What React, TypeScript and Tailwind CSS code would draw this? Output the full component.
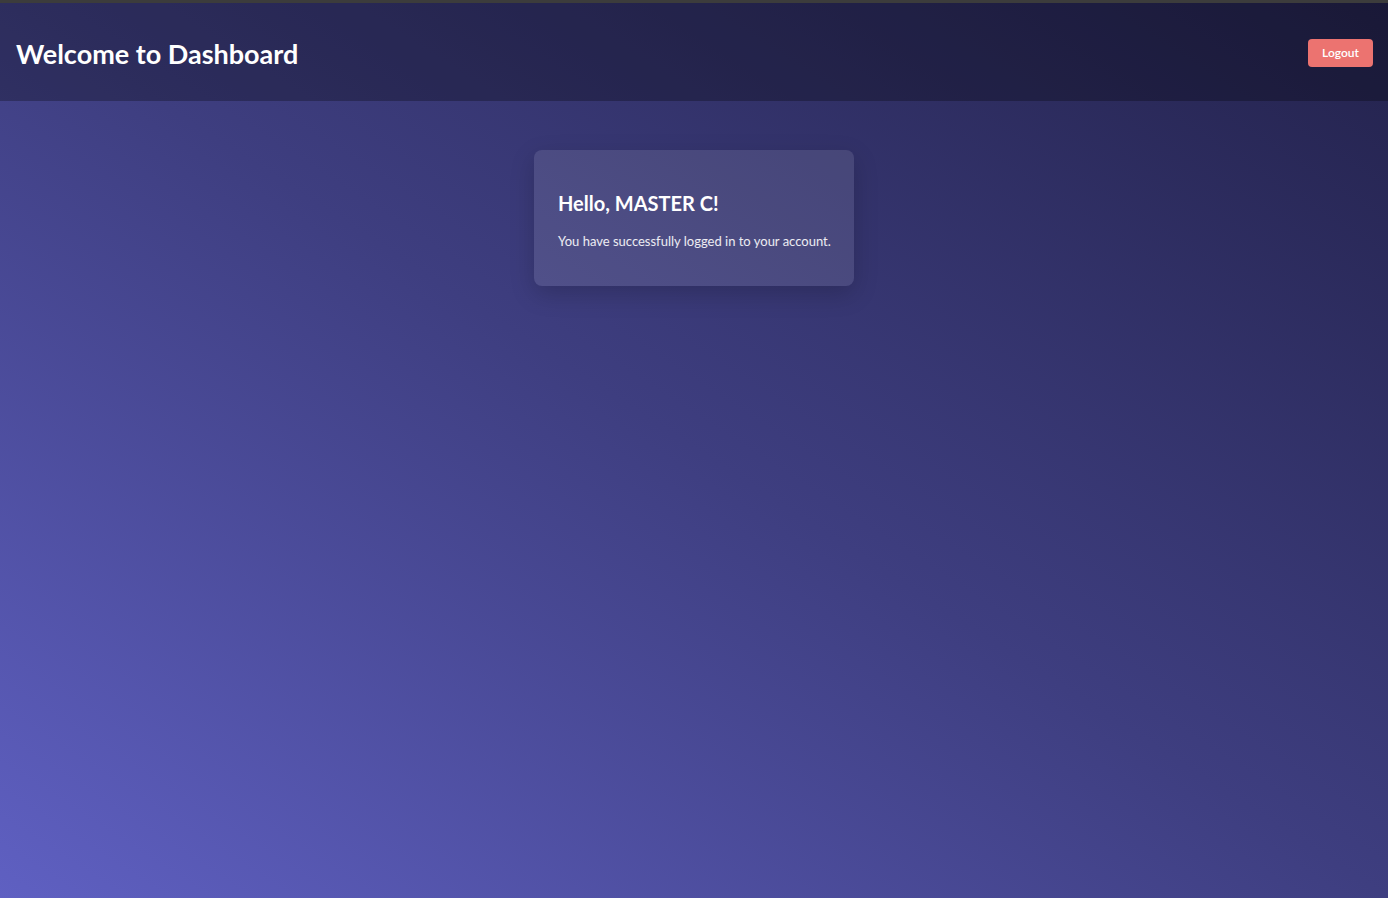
// Dashboard de bienvenida tras el login

function Encabezado() {
  return (
    <header className="h-[98px] bg-black/[0.27] flex items-center justify-between pl-4 pr-[15px]">
      <h1 className="text-[27px] font-bold text-white pt-1">Welcome to Dashboard</h1>
      <button className="mt-[2px] h-7 w-[65px] rounded bg-[#ec7370] text-white text-xs font-semibold">
        Logout
      </button>
    </header>
  )
}

function TarjetaSaludo({ nombre }: { nombre: string }) {
  return (
    <div className="w-80 h-[136px] rounded-lg bg-white/10 shadow-[0_8px_24px_rgba(0,0,0,0.18)] px-6 pt-[41px]">
      <h2 className="text-xl font-bold text-white leading-6">Hello, {nombre}!</h2>
      <p className="mt-[16px] text-[13px] text-white/90 leading-5 whitespace-nowrap">
        You have successfully logged in to your account.
      </p>
    </div>
  )
}

export default function App() {
  return (
    <div className="h-[898px] flex flex-col overflow-hidden font-['Lato',sans-serif] bg-[linear-gradient(to_top_right,#5f60c2,#3e3e80_50%,#23224c)]">
      <div className="h-[3px] bg-[#3c3c3c]" />
      <Encabezado />
      <main className="flex justify-center pt-[49px]">
        <TarjetaSaludo nombre="MASTER C" />
      </main>
    </div>
  )
}
